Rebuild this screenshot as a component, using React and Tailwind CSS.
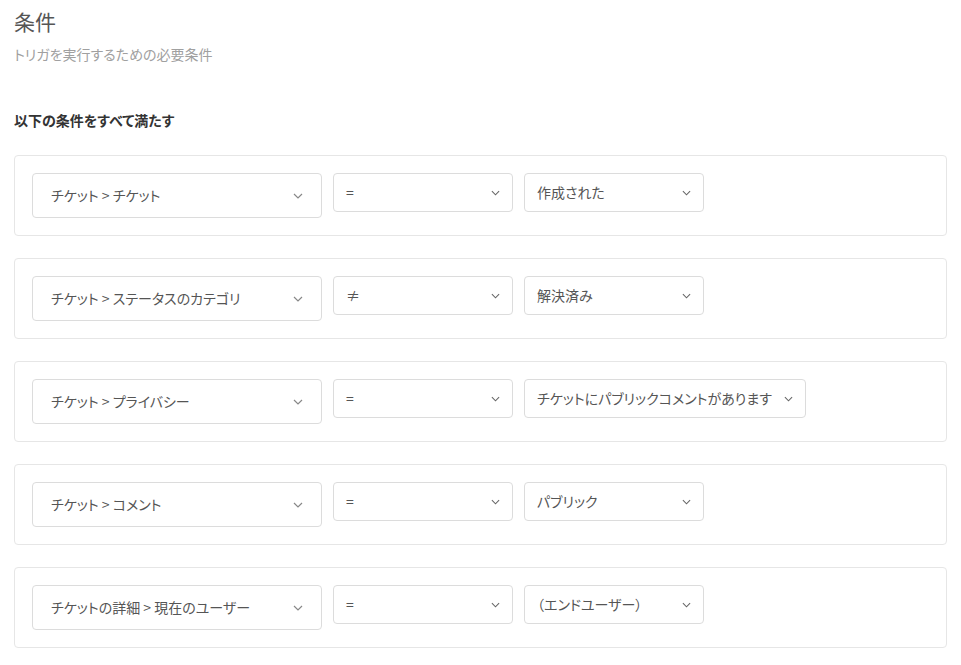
import React from "react"

const font = { fontFamily: '"Noto Sans CJK JP", "Noto Sans", sans-serif' }

const rows = [
  { field: "チケット > チケット", op: "=", value: "作成された", wide: false },
  { field: "チケット > ステータスのカテゴリ", op: "≠", value: "解決済み", wide: false },
  { field: "チケット > プライバシー", op: "=", value: "チケットにパブリックコメントがあります", wide: true },
  { field: "チケット > コメント", op: "=", value: "パブリック", wide: false },
  { field: "チケットの詳細 > 現在のユーザー", op: "=", value: "（エンドユーザー）", wide: false },
]

function Chevron({ className }) {
  return (
    <svg viewBox="0 0 10 6" className={className} fill="none" stroke="currentColor" strokeWidth="1.2">
      <path d="M1 1l4 4 4-4" />
    </svg>
  )
}

function Select({ children, className, chevron }) {
  return (
    <div
      className={`flex items-center justify-between rounded border border-[#dcdcdc] bg-white text-[14px] text-[#555] ${className}`}
    >
      <span className="whitespace-nowrap">{children}</span>
      <Chevron className={chevron} />
    </div>
  )
}

export default function App() {
  return (
    <div className="min-h-screen bg-white px-[14px] pt-[6px] [font-feature-settings:'palt']" style={font}>
      <h1 className="text-[21px] leading-[30px] text-[#555]">条件</h1>
      <p className="mt-[8px] text-[14px] leading-[20px] text-[#a0a0a0]">トリガを実行するための必要条件</p>
      <h2 className="mt-[46px] text-[14px] font-bold leading-[20px] text-[#333]">以下の条件をすべて満たす</h2>

      <div className="mt-[25px] flex flex-col gap-[22px]">
        {rows.map((r) => (
          <div key={r.field} className="flex items-start gap-[11px] rounded border border-[#e6e6e6] px-[17px] py-[17px]">
            <Select className="h-[45px] w-[290px] pl-[18px] pr-[18px]" chevron="h-[6px] w-[10px] text-[#888]">
              {r.field}
            </Select>
            <Select className="h-[39px] w-[180px] pl-[12px] pr-[12px]" chevron="h-[6px] w-[9px] text-[#666]">
              {r.op}
            </Select>
            <Select
              className={`h-[39px] ${r.wide ? "w-[282px]" : "w-[180px]"} pl-[12px] pr-[12px]`}
              chevron="h-[6px] w-[9px] text-[#666]"
            >
              {r.value}
            </Select>
          </div>
        ))}
      </div>
    </div>
  )
}
